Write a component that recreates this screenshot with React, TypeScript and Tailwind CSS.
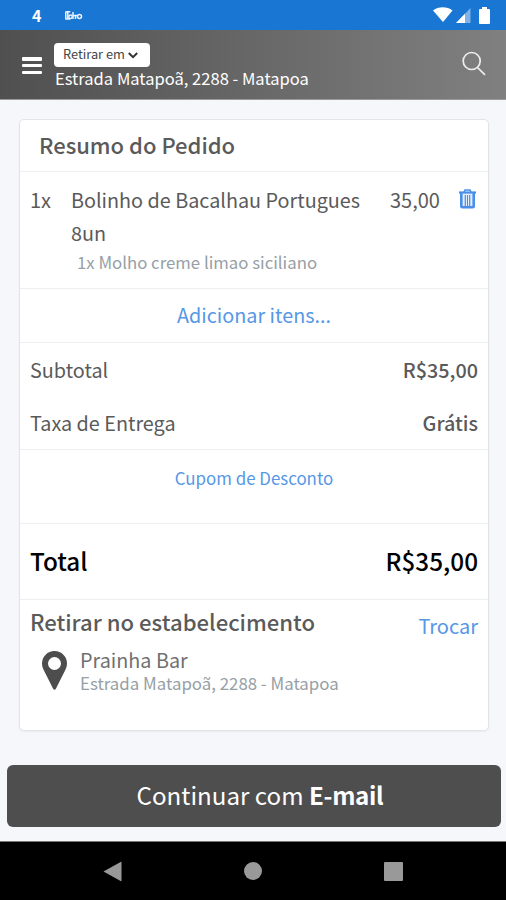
const lines = "border-b border-[#eceef0]";

function StatusBar() {
    return (
        <div className="flex h-[30px] items-center bg-[#1976d2] pr-4 pl-8 text-white">
            <span className="w-[33px] text-[16px] leading-[30px] font-bold">4</span>
            <svg width="18" height="9" viewBox="0 0 18 9" fill="none" stroke="#fff" strokeWidth="1.5" opacity=".9">
                <path d="M.8.5v8M2.800.5v8M.8.8h4.500M.8 8h4.500" />
                <circle cx="5.500" cy="5.800" r="1.700" />
                <path d="M8 1v7M8 4.500h4M10.500 5v3" />
                <circle cx="14.500" cy="5.500" r="2" />
            </svg>
            <div className="ml-auto flex items-center">
                <svg width="20" height="16" viewBox="0 0 20 16" fill="#fff">
                    <path d="M0 3.500C5.500-.8 14-.8 19.500 3.500L10 15z" />
                </svg>
                <svg className="ml-[3px]" width="15" height="15" viewBox="0 0 15 15">
                    <path d="M14.500 0v15H0z" fill="#7fb2e6" />
                    <path d="M9 5.700V15H0z" fill="#fff" />
                </svg>
                <svg className="ml-2" width="11" height="17" viewBox="0 0 11 17" fill="#fff">
                    <path d="M3 0h5v2h2q1 0 1 1v13q0 1-1 1H1q-1 0-1-1V3q0-1 1-1h2z" />
                </svg>
            </div>
        </div>
    );
}

function Header() {
    return (
        <header className="flex h-[70px] border-b border-[#9a9a9a] bg-linear-to-r from-[#505050] to-[#808080] text-white">
            <button className="mt-[27px] ml-[22px] flex h-[17px] w-5 flex-col justify-between">
                <span className="h-[3.500px] w-full rounded-[1px] bg-white" />
                <span className="h-[3.500px] w-full rounded-[1px] bg-white" />
                <span className="h-[3.500px] w-full rounded-[1px] bg-white" />
            </button>
            <div className="ml-3 pt-[13px]">
                <button className="flex h-6 w-[96px] items-center rounded-[4px] bg-white pl-[9px] text-[#444]">
                    <span className="mb-[2px] w-[65px] text-left text-[12.800px] leading-[22px] whitespace-nowrap">Retirar em</span>
                    <svg width="10" height="7" viewBox="0 0 10 7" fill="none" stroke="#333" strokeWidth="2">
                        <path d="M.8 1 5 5.200 9.200 1" />
                    </svg>
                </button>
                <p className="-mt-px pl-px text-[16.550px] leading-6 whitespace-nowrap">Estrada Matapoã, 2288 - Matapoa</p>
            </div>
            <svg className="mt-[21px] mr-5 ml-auto" width="24" height="25" viewBox="0 0 24 25" fill="none" stroke="#eee" strokeWidth="1.700">
                <circle cx="9.700" cy="10" r="8.500" />
                <path d="m15.500 16.500 7.500 7.300" />
            </svg>
        </header>
    );
}

function TrashIcon() {
    return (
        <svg width="17" height="20" viewBox="0 0 17 20" fill="none" stroke="#4a8eea">
            <path d="M2 4h13v13.500q0 1.500-1.500 1.500h-10Q2 19 2 17.500z" fill="#e3eefc" stroke="none" />
            <path d="M0 3.500h17" strokeWidth="2.200" />
            <path d="M5 3 6 1h5l1 2" strokeWidth="1.600" />
            <path d="M2.300 4v13q0 1.200 1.200 1.200h10q1.200 0 1.200-1.200V4" strokeWidth="2.600" />
            <path d="M6.300 6v11M10.700 6v11" strokeWidth="1.200" />
            <path d="M8.500 6v11" strokeWidth="1" />
        </svg>
    );
}

function OrderCard() {
    return (
        <section className="mt-[19px] mr-[17px] ml-[19px] h-[612px] rounded-[5px] border border-[#e2e4e7] bg-white shadow-xs">
            <h1 className={`h-[52px] pl-[19px] text-[22px] leading-[48px] font-medium ${lines}`}>Resumo do Pedido</h1>

            <div className={`flex h-[117px] pt-[11px] pl-[10px] ${lines}`}>
                <span className="w-[41px] text-[20px] leading-[33px]">1x</span>
                <div className="w-[319px]">
                    <p className="w-[310px] text-[19.800px] leading-[33px]">
                        Bolinho de Bacalhau Portugues
                        <br />
                        8un
                    </p>
                    <p className="pl-[6px] text-[16.800px] leading-[27px] text-[#96a0a5]">1x Molho creme limao siciliano</p>
                </div>
                <span className="w-[69px] text-[20px] leading-[33px]">35,00</span>
                <button className="mt-[6px] h-5">
                    <TrashIcon />
                </button>
            </div>

            <button className={`block h-[54px] w-full pb-[2px] text-[19.800px] leading-[51px] text-[#5697e6] ${lines}`}>Adicionar itens...</button>

            <div className={`h-[107px] px-[10px] text-[19.800px] leading-[53px] ${lines}`}>
                <div className="flex justify-between">
                    <span>Subtotal</span>
                    <span className="font-medium">R$35,00</span>
                </div>
                <div className="flex justify-between">
                    <span>Taxa de Entrega</span>
                    <span className="font-medium">Grátis</span>
                </div>
            </div>

            <button className={`block h-[74px] w-full pb-[18px] text-[16.900px] leading-[54px] text-[#5697e6] ${lines}`}>Cupom de Desconto</button>

            <div className={`flex h-[76px] justify-between px-[10px] text-[24.300px] leading-[74px] font-medium text-black ${lines}`}>
                <span>Total</span>
                <span>R$35,00</span>
            </div>

            <div className="px-[10px]">
                <div className="flex justify-between">
                    <h2 className="text-[22.100px] leading-[42px] font-medium">Retirar no estabelecimento</h2>
                    <button className="h-[46px] text-[20px] leading-[52px] text-[#5697e6]">Trocar</button>
                </div>
                <div className="mt-[2px] flex">
                    <svg className="mt-[3px] ml-3" width="25" height="39" viewBox="0 0 25 39">
                        <path fillRule="evenodd" fill="#4d4d4d" d="M12.500 0C5.500 0 0 5.500 0 12.500c0 3 1 5 2.200 7.500l8.800 17.500q1.500 2.500 3 0L22.800 20C24 17.500 25 15.500 25 12.500 25 5.500 19.500 0 12.500 0m0 6a6.500 6.500 0 1 1 0 13 6.500 6.500 0 0 1 0-13" />
                    </svg>
                    <div className="ml-[13px]">
                        <p className="text-[19.800px] leading-6 text-[#707070]">Prainha Bar</p>
                        <p className="text-[16.850px] leading-[22px] text-[#96a0a5]">Estrada Matapoã, 2288 - Matapoa</p>
                    </div>
                </div>
            </div>
        </section>
    );
}

function NavBar() {
    return (
        <nav className="mt-auto flex h-[59px] items-center justify-between border-t border-[#777] bg-black pr-[103px] pl-[103px]">
            <svg width="19" height="21" viewBox="0 0 19 21" fill="#999">
                <path d="M18.500.5v20L.5 10.500z" />
            </svg>
            <span className="size-[18px] rounded-full bg-[#999]" />
            <span className="size-[19px] rounded-[1px] bg-[#999]" />
        </nav>
    );
}

export default function App() {
    return (
        <div className="flex h-[900px] w-[506px] flex-col overflow-hidden bg-[#f5f7fb] font-['Noto_Sans_CJK_SC','Noto_Sans',sans-serif] text-[#5a5a5a]">
            <StatusBar />
            <Header />
            <OrderCard />
            <button className="mt-[34px] ml-[7px] h-[62px] w-[494px] rounded-[6px] bg-[#4e4e4e] pl-[12px] text-[24.150px] leading-[60px] text-white">
                <span className="mb-[3px] inline-block">
                    Continuar com <b className="tracking-[-0.3px]">E-mail</b>
                </span>
            </button>
            <NavBar />
        </div>
    );
}
